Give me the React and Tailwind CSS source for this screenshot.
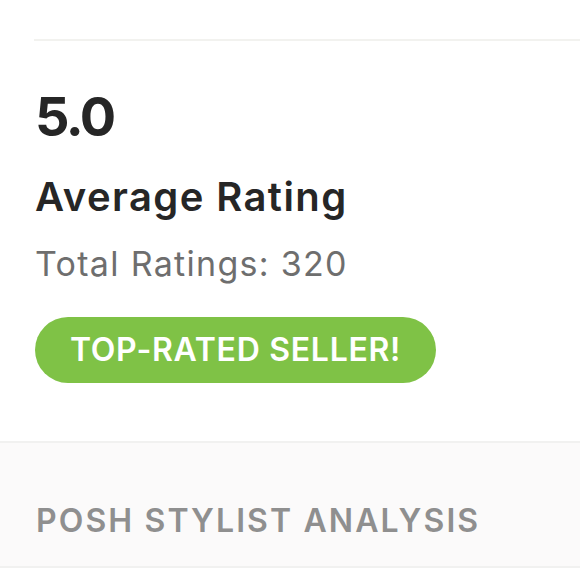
export default function App() {
  return (
    <div className="w-[580px] h-[580px] bg-white overflow-hidden" style={{ fontFamily: "Inter, 'Noto Sans', sans-serif" }}>
      <div className="pt-[39px]">
        <div className="ml-[34px] h-[2px] bg-[#f2f2ef]" />
      </div>
      <div className="pl-[35px]">
        <div className="mt-[49px] text-[54px] leading-none font-bold text-[#262626] tracking-[-2.5px]">5.0</div>
        <div className="mt-[33px] text-[40px] leading-none font-semibold text-[#262626] tracking-[1.4px]">Average Rating</div>
        <div className="mt-[30px] text-[34px] leading-none font-normal text-[#6e6e6e] tracking-[1.3px]">Total Ratings: 320</div>
        <div className="mt-[36px] h-[66px] w-[401px] rounded-full bg-[#7fc246] flex items-center justify-center">
          <span className="text-[32px] leading-none font-semibold text-white tracking-[0.7px]">TOP-RATED SELLER!</span>
        </div>
      </div>
      <div className="mt-[58px] h-[127px] border-t-2 border-b-2 border-[#f1f1f0] bg-[#fbfafa] pl-[36px] pt-[62px]">
        <div className="text-[32px] leading-none font-semibold text-[#8f8f8f] tracking-[2.1px]">POSH STYLIST ANALYSIS</div>
      </div>
    </div>
  );
}
